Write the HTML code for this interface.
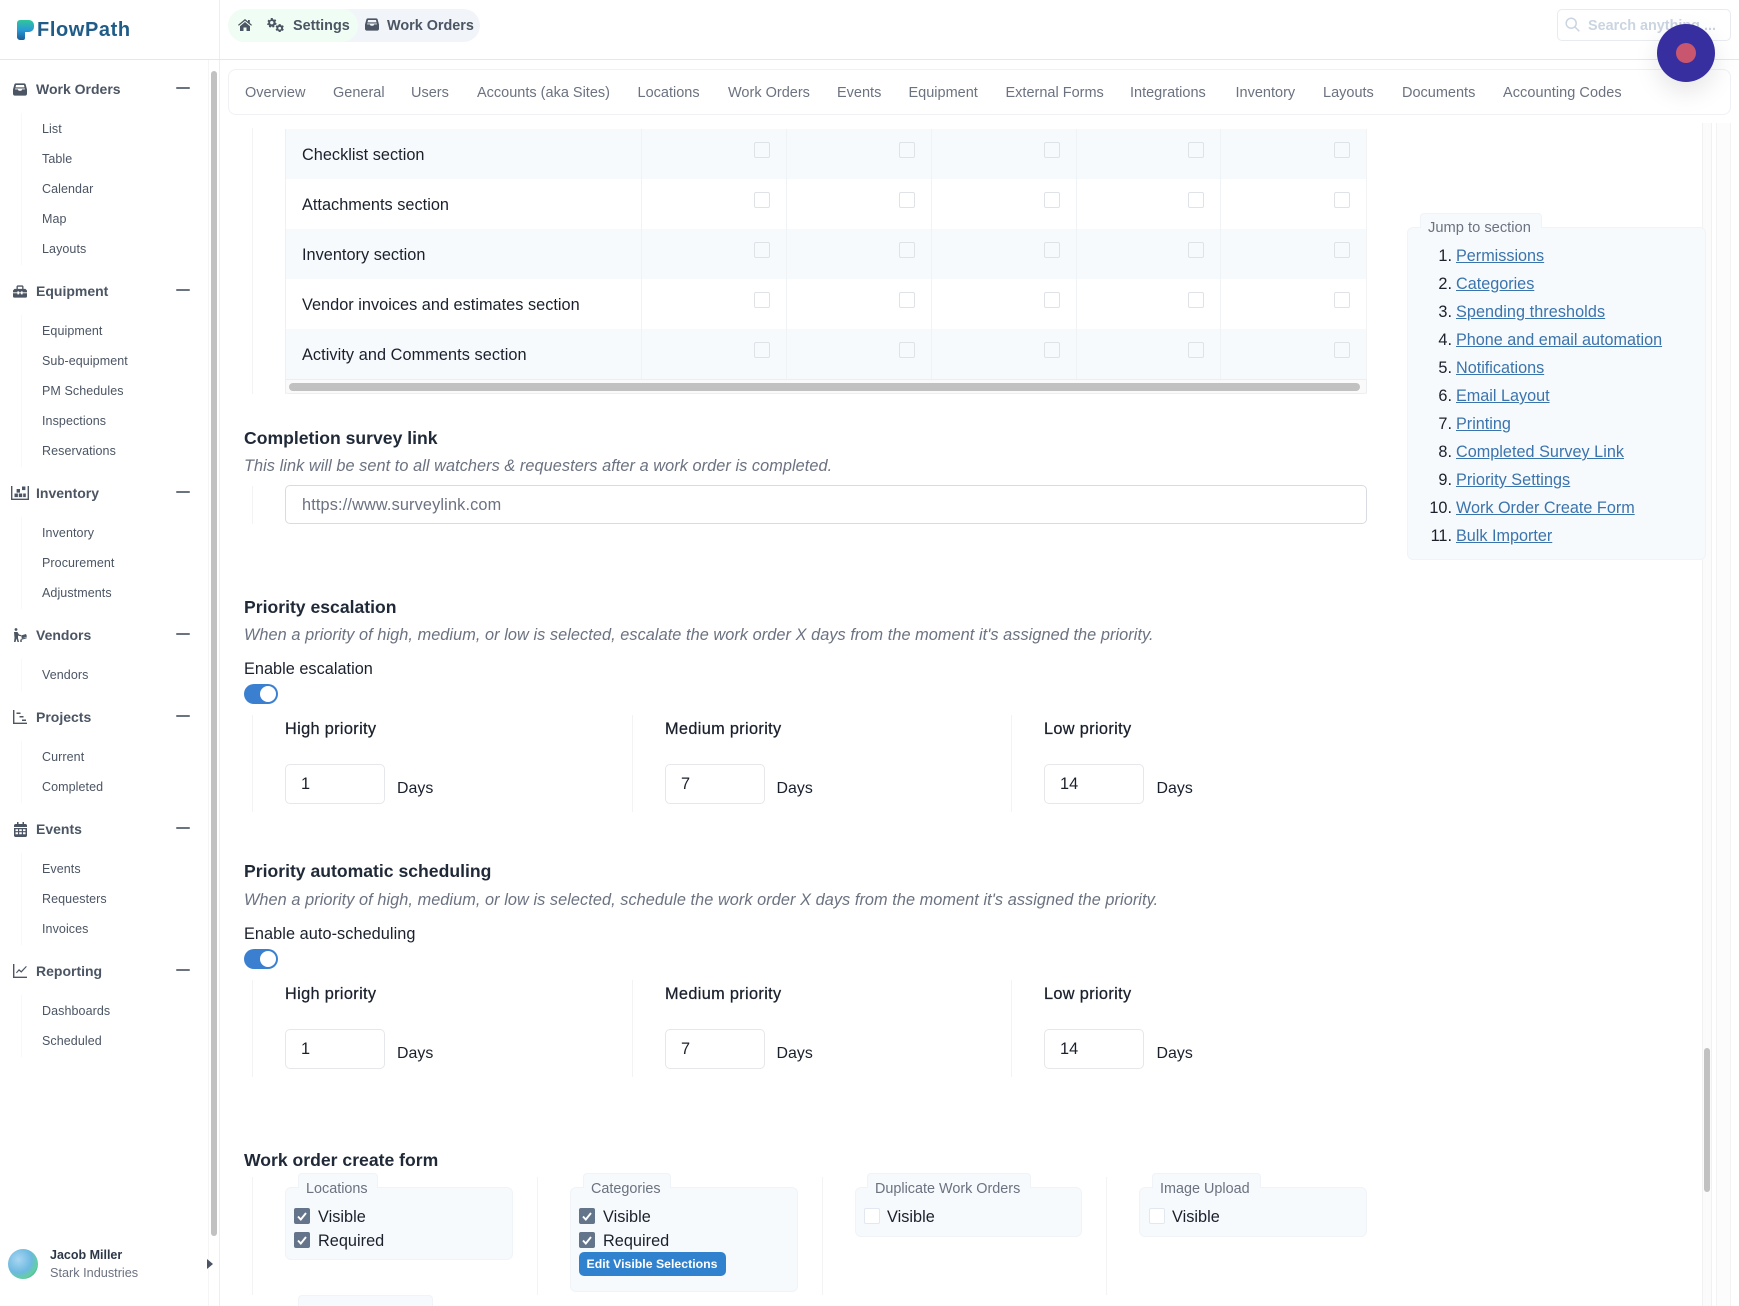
<!DOCTYPE html>
<html lang="en"><head><meta charset="utf-8"><title>FlowPath</title>
<style>
*{box-sizing:border-box}
html,body{margin:0;padding:0;background:#fff}
body{position:relative;width:1739px;height:1306px;overflow:hidden;font-family:"Liberation Sans",Arial,sans-serif;color:#1a202c}
.t{position:absolute;white-space:nowrap;line-height:20px;height:20px;margin-top:1px}
.a{position:absolute}
.hd{font-size:14px;font-weight:700;color:#4b5563;left:36px;margin-top:0}
.sb{font-size:12.5px;letter-spacing:.08px;color:#4b5563;left:42px}
.mn{left:176px;width:14px;height:2px;background:#6b7280;border-radius:1px}
.sl{left:21px;width:1px;background:#f7f8f9}
.ic{position:absolute;fill:#4b5563}
.tab{font-size:14.5px;color:#6b7280;top:82px}
.b{font-size:16.3px;letter-spacing:.02px;color:#1a202c}
.d{font-size:15.9px}
.val{margin-top:0}
.i{font-size:16.3px;letter-spacing:.065px;color:#6b7280;font-style:italic;left:244px}
.h{font-size:17.6px;font-weight:700;color:#1f2937;left:244px;margin-top:0}
.m{-webkit-text-stroke:.25px currentColor;letter-spacing:.35px}
.v{width:1px;background:#f1f3f5}
.r{left:285px;width:1082px;height:50px}
.cb{width:16px;height:16px;border:1.5px solid #dfe3e8;border-radius:2px;background:transparent;margin:-.5px 0 0 -.5px}
.cb2{width:16px;height:16px;border:1.5px solid #e2e8f0;border-radius:2px;background:#fff}
.ck{width:16px;height:16px;border-radius:2px;background:#64748b}
.inp{width:100px;height:40px;border:1px solid #e5e7eb;border-radius:5px;background:#fff}
.tg{left:244px;width:34px;height:20px;border-radius:10px;background:#3b80d0}
.tg i{position:absolute;right:2px;top:2px;width:16px;height:16px;border-radius:50%;background:#fff}
.box{background:#f7fafc;border:1px solid #f0f4f8;border-radius:6px}
.lg{background:#f7fafc;border:1px solid #f0f4f8;border-bottom:0;border-radius:4px 4px 0 0;height:15px}
.lt{font-size:14.4px;color:#6b7280}
.n{font-size:16.3px;color:#1a202c;text-align:right;width:40px;left:1412px}
.l{font-size:16.2px;color:#3b74ad;text-decoration:underline;left:1456px}
.nm{margin-top:0}
</style></head><body>
<svg width="0" height="0" style="position:absolute">
<defs>
<linearGradient id="lg" x1="0" y1="0" x2="0" y2="1"><stop offset="0" stop-color="#2fc79a"/><stop offset=".5" stop-color="#2a9ad6"/><stop offset="1" stop-color="#1d5c96"/></linearGradient>
<radialGradient id="av" cx=".35" cy=".35" r=".8"><stop offset="0" stop-color="#a9d6f2"/><stop offset=".55" stop-color="#6db9e0"/><stop offset=".8" stop-color="#63cfa0"/><stop offset="1" stop-color="#2f9a9a"/></radialGradient>
<symbol id="inbox" viewBox="0 0 16 14"><path fill-rule="evenodd" d="M3.200 0h9.600c.8 0 1.400.5 1.600 1.200L16 7v5c0 1.100-.9 2-2 2H2c-1.100 0-2-.9-2-2V7l1.600-5.800C1.800.5 2.400 0 3.200 0zm.3 1.800L2.800 4.600h10.400l-.7-2.800zM2.400 5.800v1h3.100l1 1.600h3l1-1.600h3.100v-1z"/></symbol>
<symbol id="tool" viewBox="0 0 16 14"><path d="M5 0h6l1 1.200V4h2.200L16 5.800V8H11V6.800H9V8H7V6.800H5V8H0V5.800L1.800 4H4V1.200zM5.500 1.500V4h5V1.500zM0 9h5v1.300h2V9h2v1.300h2V9h5v3.500c0 .8-.7 1.500-1.500 1.500h-13C.7 14 0 13.300 0 12.500z"/></symbol>
<symbol id="ware" viewBox="0 0 18 14"><path d="M0 0h1.400v12.600h15.200V0H18v14H0zM3.500 7.500h3.400v3.600H3.500zM7.800 7.500h3.400v3.600H7.800zM5.600 3h3.400v3.600H5.600zM12.200 7.500h2.600v3.600h-2.600z"/><path d="M11 .5h3.400v3.600H11z"/></symbol>
<symbol id="dolly" viewBox="0 0 14 14"><circle cx="3" cy="1.500" r="1.400"/><path d="M1 4h3.500l1.500 2.500 2 .5v1.300l-2.700-.5L5 7.200V10l1 4H4.500L3.500 10.500 2.500 14H1l.5-4zM8 7.500l5-1.500 1 2.500-5 2zM7.500 11l6-1.800.3 1-6 1.800z"/><circle cx="8" cy="13" r="1"/></symbol>
<symbol id="gantt" viewBox="0 0 14 14"><path d="M0 0h1.400v12.600H14V14H0zM3.500 2.500h4v1.500h-4zM6.500 6h4v1.500h-4zM9 9.500h4V11H9z"/></symbol>
<symbol id="cal" viewBox="0 0 13 15"><path fill-rule="evenodd" d="M3 0h1.500v2h4V0H10v2h1.500c.8 0 1.500.7 1.500 1.500V5H0V3.500C0 2.700.7 2 1.500 2H3zM0 6h13v7.500c0 .8-.7 1.500-1.500 1.500h-10C.7 15 0 14.300 0 13.500zm1.500 1.300v1.800h2.500V7.300zm3.700 0v1.800h2.600V7.300zm3.800 0v1.800h2.500V7.300zm-7.500 3v1.900h2.500v-1.900zm3.700 0v1.900h2.600v-1.900zm3.800 0v1.900h2.500v-1.900z"/></symbol>
<symbol id="line" viewBox="0 0 14 14"><path d="M0 0h1.400v12.600H14V14H0z"/><path d="M3 8.500l3-3.500 2.200 2L13 2l.8.800-5.500 6L6 6.800 3.800 9.300z"/></symbol>
<symbol id="home" viewBox="0 0 14 12"><path d="M7 0l3 2.500V1h1.800v3L14 5.900l-.8.900L7 1.700.8 6.800 0 5.900zM2 7.200L7 3l5 4.200V12H8.500V8.500h-3V12H2z"/></symbol>
<symbol id="gears" viewBox="0 0 18 15"><path fill-rule="evenodd" d="M4 0h2l.3 1.300 1.200.6 1.200-.6 1.100 1.500-.9 1 .1 1.300 1.200.5-.5 1.800-1.300-.1-.8 1 .3 1.300-1.800.6-.7-1.100H4.400l-.7 1.100-1.800-.6.300-1.300-.8-1-1.300.1L0 6.100l1.200-.5.1-1.300-.9-1L1.500 1.800l1.200.6 1.100-.6zm1 3.200a1.800 1.800 0 100 3.600 1.800 1.800 0 000-3.600z"/><path fill-rule="evenodd" d="M12.500 6.500h2l.3 1.200 1 .5 1.100-.4 1 1.600-.9.800v1.200l.9.800-1 1.600-1.100-.4-1 .5-.3 1.100h-2l-.3-1.100-1-.5-1.100.4-1-1.600.9-.8v-1.200l-.9-.8 1-1.600 1.100.4 1-.5zm1 3a1.500 1.500 0 100 3 1.500 1.500 0 000-3z"/></symbol>
<symbol id="chk" viewBox="0 0 16 16"><path d="M4 8.500l2.800 3L12 5" fill="none" stroke="#fff" stroke-width="1.900"/></symbol>
</defs></svg>

<!-- sidebar -->
<div class="a" style="left:219px;top:0;width:1px;height:1306px;background:#eceef1"></div>
<div class="a" style="left:0;top:59px;width:1739px;height:1px;background:#e5e7eb"></div>
<svg class="a" style="left:17px;top:20px" width="17" height="20" viewBox="0 0 17 20"><path fill="url(#lg)" d="M3 0h9a5 5 0 015 5v2a5 5 0 01-5 5H8v6a2 2 0 01-2 2H3a3 3 0 01-3-3V3a3 3 0 013-3z"/></svg>
<div class="t nm" style="left:37px;top:20px;font-size:20px;font-weight:700;letter-spacing:.6px;color:#1f5c88">FlowPath</div>
<div class="a" style="left:208px;top:60px;width:1px;height:1246px;background:#f5f5f5"></div>
<div class="a" style="left:211px;top:71px;width:6px;height:1165px;background:#c1c1c1;border-radius:3px"></div>

<svg class="ic" style="left:13px;top:83px" width="14" height="13"><use href="#inbox"/></svg>
<div class="t hd" style="top:79px">Work Orders</div><div class="a mn" style="top:87px"></div>
<div class="a sl" style="top:113px;height:152px"></div>
<div class="t sb" style="top:118px">List</div><div class="t sb" style="top:148px">Table</div><div class="t sb" style="top:178px">Calendar</div><div class="t sb" style="top:208px">Map</div><div class="t sb" style="top:238px">Layouts</div>

<svg class="ic" style="left:13px;top:285px" width="14" height="13"><use href="#tool"/></svg>
<div class="t hd" style="top:281px">Equipment</div><div class="a mn" style="top:289px"></div>
<div class="a sl" style="top:315px;height:152px"></div>
<div class="t sb" style="top:320px">Equipment</div><div class="t sb" style="top:350px">Sub-equipment</div><div class="t sb" style="top:380px">PM Schedules</div><div class="t sb" style="top:410px">Inspections</div><div class="t sb" style="top:440px">Reservations</div>

<svg class="ic" style="left:11px;top:486px" width="18" height="14"><use href="#ware"/></svg>
<div class="t hd" style="top:483px">Inventory</div><div class="a mn" style="top:491px"></div>
<div class="a sl" style="top:517px;height:92px"></div>
<div class="t sb" style="top:522px">Inventory</div><div class="t sb" style="top:552px">Procurement</div><div class="t sb" style="top:582px">Adjustments</div>

<svg class="ic" style="left:13px;top:628px" width="14" height="14"><use href="#dolly"/></svg>
<div class="t hd" style="top:625px">Vendors</div><div class="a mn" style="top:633px"></div>
<div class="a sl" style="top:659px;height:32px"></div>
<div class="t sb" style="top:664px">Vendors</div>

<svg class="ic" style="left:13px;top:710px" width="14" height="14"><use href="#gantt"/></svg>
<div class="t hd" style="top:707px">Projects</div><div class="a mn" style="top:715px"></div>
<div class="a sl" style="top:741px;height:62px"></div>
<div class="t sb" style="top:746px">Current</div><div class="t sb" style="top:776px">Completed</div>

<svg class="ic" style="left:14px;top:822px" width="13" height="15"><use href="#cal"/></svg>
<div class="t hd" style="top:819px">Events</div><div class="a mn" style="top:827px"></div>
<div class="a sl" style="top:853px;height:92px"></div>
<div class="t sb" style="top:858px">Events</div><div class="t sb" style="top:888px">Requesters</div><div class="t sb" style="top:918px">Invoices</div>

<svg class="ic" style="left:13px;top:964px" width="14" height="14"><use href="#line"/></svg>
<div class="t hd" style="top:961px">Reporting</div><div class="a mn" style="top:969px"></div>
<div class="a sl" style="top:995px;height:62px"></div>
<div class="t sb" style="top:1000px">Dashboards</div><div class="t sb" style="top:1030px">Scheduled</div>

<svg class="a" style="left:8px;top:1249px" width="30" height="30"><circle cx="15" cy="15" r="15" fill="url(#av)"/></svg>
<div class="t nm" style="left:50px;top:1245px;font-size:12.5px;font-weight:700;color:#2d3748">Jacob Miller</div>
<div class="t nm" style="left:50px;top:1263px;font-size:12.7px;color:#6b7280">Stark Industries</div>
<svg class="a" style="left:207px;top:1259px" width="6" height="10"><path d="M0 0l6 5-6 5z" fill="#4b5563"/></svg>

<!-- header -->
<div class="a" style="left:228px;top:9px;width:252px;height:33px;background:#f1f5f9;border-radius:17px"></div>
<div class="a" style="left:228px;top:9px;width:130px;height:33px;background:#f0fdf4;border-radius:17px"></div>
<svg class="ic" style="left:238px;top:19px" width="14" height="12"><use href="#home"/></svg>
<svg class="ic" style="left:267px;top:18px" width="17" height="14"><use href="#gears"/></svg>
<div class="t" style="left:293px;top:15px;font-size:14.4px;font-weight:700;color:#4b5563">Settings</div>
<svg class="ic" style="left:365px;top:18px" width="14" height="13"><use href="#inbox"/></svg>
<div class="t nm" style="left:387px;top:16px;font-size:14.4px;font-weight:700;color:#4b5563">Work Orders</div>

<div class="a" style="left:1557px;top:9px;width:174px;height:32px;border:1px solid #e8ebef;border-radius:5px;background:#fff"></div>
<svg class="a" style="left:1565px;top:17px" width="15" height="15" viewBox="0 0 15 15"><circle cx="6.200" cy="6.200" r="5" fill="none" stroke="#cbd5e1" stroke-width="1.500"/><path d="M10 10l4.300 4.300" stroke="#cbd5e1" stroke-width="1.500"/></svg>
<div class="t" style="left:1588px;top:15px;font-size:14.4px;font-weight:700;color:#cbd5e1">Search anything ...</div>

<!-- tabs -->
<div class="a" style="left:228px;top:69px;width:1503px;height:46px;border:1px solid #eff1f4;border-radius:8px;background:#fff"></div>
<div class="t tab" style="left:245px">Overview</div><div class="t tab" style="left:333px">General</div><div class="t tab" style="left:411px">Users</div><div class="t tab" style="left:477px">Accounts (aka Sites)</div><div class="t tab" style="left:637.5px">Locations</div><div class="t tab" style="left:728px">Work Orders</div><div class="t tab" style="left:837px">Events</div><div class="t tab" style="left:908.5px">Equipment</div><div class="t tab" style="left:1005.5px">External Forms</div><div class="t tab" style="left:1130px">Integrations</div><div class="t tab" style="left:1235.5px">Inventory</div><div class="t tab" style="left:1323px">Layouts</div><div class="t tab" style="left:1402px">Documents</div><div class="t tab" style="left:1503px;letter-spacing:.06px">Accounting Codes</div>

<!-- right scroll tracks -->
<div class="a" style="left:1702px;top:123px;width:10px;height:1183px;background:#fbfbfb;border-left:1px solid #f1f1f1;border-right:1px solid #f1f1f1"></div>
<div class="a" style="left:1716px;top:123px;width:15px;height:1183px;background:#fcfcfc;border-left:1px solid #f3f3f3;border-right:1px solid #f3f3f3"></div>
<div class="a" style="left:1704px;top:1048px;width:6px;height:144px;background:#c1c1c1;border-radius:3px"></div>

<!-- table -->
<div class="a v" style="left:252px;top:128px;height:266px"></div>
<div class="a r" style="top:129px;background:#f7fafc"></div>
<div class="a r" style="top:229px;background:#f7fafc"></div>
<div class="a r" style="top:329px;background:#f7fafc"></div>
<div class="a" style="left:285px;top:129px;width:1px;height:265px;background:#eef1f4"></div>
<div class="a" style="left:1366px;top:129px;width:1px;height:265px;background:#f1f3f5"></div>
<div class="a v" style="left:641px;top:129px;height:250px;background:#f0f3f6"></div>
<div class="a v" style="left:786px;top:129px;height:250px;background:#f0f3f6"></div>
<div class="a v" style="left:931px;top:129px;height:250px;background:#f0f3f6"></div>
<div class="a v" style="left:1076px;top:129px;height:250px;background:#f0f3f6"></div>
<div class="a v" style="left:1220px;top:129px;height:250px;background:#f0f3f6"></div>
<div class="t b" style="left:302px;top:144px">Checklist section</div>
<div class="t b" style="left:302px;top:194px">Attachments section</div>
<div class="t b" style="left:302px;top:244px">Inventory section</div>
<div class="t b" style="left:302px;top:294px">Vendor invoices and estimates section</div>
<div class="t b" style="left:302px;top:344px;letter-spacing:.07px">Activity and Comments section</div>

<div class="a cb" style="left:754px;top:142px"></div><div class="a cb" style="left:899px;top:142px"></div><div class="a cb" style="left:1044px;top:142px"></div><div class="a cb" style="left:1188px;top:142px"></div><div class="a cb" style="left:1334px;top:142px"></div>
<div class="a cb" style="left:754px;top:192px"></div><div class="a cb" style="left:899px;top:192px"></div><div class="a cb" style="left:1044px;top:192px"></div><div class="a cb" style="left:1188px;top:192px"></div><div class="a cb" style="left:1334px;top:192px"></div>
<div class="a cb" style="left:754px;top:242px"></div><div class="a cb" style="left:899px;top:242px"></div><div class="a cb" style="left:1044px;top:242px"></div><div class="a cb" style="left:1188px;top:242px"></div><div class="a cb" style="left:1334px;top:242px"></div>
<div class="a cb" style="left:754px;top:292px"></div><div class="a cb" style="left:899px;top:292px"></div><div class="a cb" style="left:1044px;top:292px"></div><div class="a cb" style="left:1188px;top:292px"></div><div class="a cb" style="left:1334px;top:292px"></div>
<div class="a cb" style="left:754px;top:342px"></div><div class="a cb" style="left:899px;top:342px"></div><div class="a cb" style="left:1044px;top:342px"></div><div class="a cb" style="left:1188px;top:342px"></div><div class="a cb" style="left:1334px;top:342px"></div>

<div class="a" style="left:285px;top:379px;width:1082px;height:15px;background:#fafafa;border:1px solid #eceff2;border-radius:0 0 3px 3px"></div>
<div class="a" style="left:289px;top:383px;width:1071px;height:8px;background:#c1c1c1;border-radius:4px"></div>

<!-- survey -->
<div class="t h" style="top:428px">Completion survey link</div>
<div class="t i" style="top:454.5px">This link will be sent to all watchers &amp; requesters after a work order is completed.</div>
<div class="a v" style="left:252px;top:486px;height:38px"></div>
<div class="a" style="left:285px;top:485px;width:1082px;height:39px;border:1px solid #d8dce2;border-radius:5px;background:#fff"></div>
<div class="t b" style="left:302px;top:494px;color:#6b7280;letter-spacing:.15px">https://www.surveylink.com</div>

<!-- escalation -->
<div class="t h" style="top:597px">Priority escalation</div>
<div class="t i" style="top:624px">When a priority of high, medium, or low is selected, escalate the work order X days from the moment it's assigned the priority.</div>
<div class="t b" style="left:244px;top:658px">Enable escalation</div>
<div class="a tg" style="top:684px"><i></i></div>
<div class="a v" style="left:252px;top:715px;height:97px"></div><div class="a v" style="left:632px;top:715px;height:97px"></div><div class="a v" style="left:1011px;top:715px;height:97px"></div>
<div class="t b m" style="left:285px;top:718px">High priority</div><div class="t b m" style="left:665px;top:718px">Medium priority</div><div class="t b m" style="left:1044px;top:718px">Low priority</div>
<div class="a inp" style="left:285px;top:764px"></div><div class="a inp" style="left:665px;top:764px"></div><div class="a inp" style="left:1044px;top:764px"></div>
<div class="t b val" style="left:301px;top:774px">1</div><div class="t b val" style="left:681px;top:774px">7</div><div class="t b val" style="left:1060px;top:774px">14</div>
<div class="t b d" style="left:397px;top:778px">Days</div><div class="t b d" style="left:776.5px;top:778px">Days</div><div class="t b d" style="left:1156.5px;top:778px">Days</div>

<!-- scheduling -->
<div class="t h" style="top:861px">Priority automatic scheduling</div>
<div class="t i" style="top:889px">When a priority of high, medium, or low is selected, schedule the work order X days from the moment it's assigned the priority.</div>
<div class="t b" style="left:244px;top:923px;letter-spacing:.06px">Enable auto-scheduling</div>
<div class="a tg" style="top:949px"><i></i></div>
<div class="a v" style="left:252px;top:980px;height:97px"></div><div class="a v" style="left:632px;top:980px;height:97px"></div><div class="a v" style="left:1011px;top:980px;height:97px"></div>
<div class="t b m" style="left:285px;top:983px">High priority</div><div class="t b m" style="left:665px;top:983px">Medium priority</div><div class="t b m" style="left:1044px;top:983px">Low priority</div>
<div class="a inp" style="left:285px;top:1029px"></div><div class="a inp" style="left:665px;top:1029px"></div><div class="a inp" style="left:1044px;top:1029px"></div>
<div class="t b val" style="left:301px;top:1039px">1</div><div class="t b val" style="left:681px;top:1039px">7</div><div class="t b val" style="left:1060px;top:1039px">14</div>
<div class="t b d" style="left:397px;top:1043px">Days</div><div class="t b d" style="left:776.5px;top:1043px">Days</div><div class="t b d" style="left:1156.5px;top:1043px">Days</div>

<!-- create form -->
<div class="t h" style="top:1150px">Work order create form</div>
<div class="a v" style="left:252px;top:1177px;height:118px"></div><div class="a v" style="left:537px;top:1177px;height:118px"></div><div class="a v" style="left:822px;top:1177px;height:118px"></div><div class="a v" style="left:1106px;top:1177px;height:118px"></div>

<div class="a box" style="left:285px;top:1187px;width:228px;height:73px"></div>
<div class="a lg" style="left:298px;top:1173px;width:80px"></div>
<div class="t lt" style="left:306px;top:1178px">Locations</div>
<div class="a ck" style="left:294px;top:1208px"><svg width="16" height="16"><use href="#chk"/></svg></div><div class="t b" style="left:318px;top:1206px">Visible</div>
<div class="a ck" style="left:294px;top:1232px"><svg width="16" height="16"><use href="#chk"/></svg></div><div class="t b" style="left:318px;top:1230px">Required</div>

<div class="a box" style="left:570px;top:1187px;width:228px;height:105px"></div>
<div class="a lg" style="left:583px;top:1173px;width:88px"></div>
<div class="t lt" style="left:591px;top:1178px">Categories</div>
<div class="a ck" style="left:579px;top:1208px"><svg width="16" height="16"><use href="#chk"/></svg></div><div class="t b" style="left:603px;top:1206px">Visible</div>
<div class="a ck" style="left:579px;top:1232px"><svg width="16" height="16"><use href="#chk"/></svg></div><div class="t b" style="left:603px;top:1230px">Required</div>
<div class="a" style="left:579px;top:1252px;width:147px;height:24px;background:#3182ce;border-radius:5px"></div>
<div class="t nm" style="left:586.5px;top:1254px;font-size:12.3px;font-weight:700;color:#fff">Edit Visible Selections</div>

<div class="a box" style="left:855px;top:1187px;width:227px;height:50px"></div>
<div class="a lg" style="left:867px;top:1173px;width:164px"></div>
<div class="t lt" style="left:875px;top:1178px">Duplicate Work Orders</div>
<div class="a cb2" style="left:864px;top:1208px"></div><div class="t b" style="left:887px;top:1206px">Visible</div>

<div class="a box" style="left:1139px;top:1187px;width:228px;height:50px"></div>
<div class="a lg" style="left:1152px;top:1173px;width:109px"></div>
<div class="t lt" style="left:1160px;top:1178px">Image Upload</div>
<div class="a cb2" style="left:1149px;top:1208px"></div><div class="t b" style="left:1172px;top:1206px">Visible</div>

<div class="a lg" style="left:298px;top:1295px;width:135px;height:11px"></div>

<!-- jump -->
<div class="a box" style="left:1407px;top:227px;width:299px;height:333px"></div>
<div class="a lg" style="left:1420px;top:213px;width:122px"></div>
<div class="t lt" style="left:1428px;top:217px;font-size:14.7px">Jump to section</div>
<div class="t n" style="top:245px">1.</div><a class="t l" style="top:245px">Permissions</a>
<div class="t n" style="top:273px">2.</div><a class="t l" style="top:273px">Categories</a>
<div class="t n" style="top:301px">3.</div><a class="t l" style="top:301px;letter-spacing:.08px">Spending thresholds</a>
<div class="t n" style="top:329px">4.</div><a class="t l" style="top:329px">Phone and email automation</a>
<div class="t n" style="top:357px">5.</div><a class="t l" style="top:357px">Notifications</a>
<div class="t n" style="top:385px">6.</div><a class="t l" style="top:385px">Email Layout</a>
<div class="t n" style="top:413px">7.</div><a class="t l" style="top:413px">Printing</a>
<div class="t n" style="top:441px">8.</div><a class="t l" style="top:441px;letter-spacing:.03px">Completed Survey Link</a>
<div class="t n" style="top:469px">9.</div><a class="t l" style="top:469px;letter-spacing:.05px">Priority Settings</a>
<div class="t n" style="top:497px">10.</div><a class="t l" style="top:497px">Work Order Create Form</a>
<div class="t n" style="top:525px">11.</div><a class="t l" style="top:525px">Bulk Importer</a>

<!-- floating -->
<div class="a" style="left:1657px;top:24px;width:58px;height:58px;border-radius:50%;background:#372ea0;box-shadow:0 10px 25px rgba(0,0,0,.1)"></div>
<div class="a" style="left:1676px;top:43px;width:20px;height:20px;border-radius:50%;background:#c9566f"></div>
</body></html>
